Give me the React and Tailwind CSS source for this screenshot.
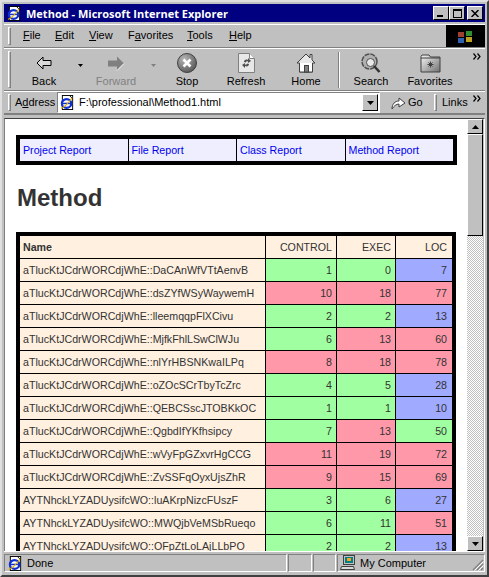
import React from "react";

const F = { fontFamily: '"Liberation Sans", Arial, sans-serif' };
const UI = { fontFamily: '"Liberation Sans", Arial, sans-serif' };
const TITLE = { fontFamily: '"Open Sans", "Noto Sans", sans-serif' };

const G = "bg-[#a0ffa0]";
const P = "bg-[#ff99aa]";
const B = "bg-[#a0aaff]";

const rows = [
  ["aTlucKtJCdrWORCdjWhE::DaCAnWfVTtAenvB", 1, G, 0, G, 7, B],
  ["aTlucKtJCdrWORCdjWhE::dsZYfWSyWaywemH", 10, P, 18, P, 77, P],
  ["aTlucKtJCdrWORCdjWhE::lleemqqpFlXCivu", 2, G, 2, G, 13, B],
  ["aTlucKtJCdrWORCdjWhE::MjfkFhlLSwClWJu", 6, G, 13, P, 60, P],
  ["aTlucKtJCdrWORCdjWhE::nlYrHBSNKwaILPq", 8, P, 18, P, 78, P],
  ["aTlucKtJCdrWORCdjWhE::oZOcSCrTbyTcZrc", 4, G, 5, G, 28, B],
  ["aTlucKtJCdrWORCdjWhE::QEBCSscJTOBKkOC", 1, G, 1, G, 10, B],
  ["aTlucKtJCdrWORCdjWhE::QgbdIfYKfhsipcy", 7, G, 13, P, 50, G],
  ["aTlucKtJCdrWORCdjWhE::wVyFpGZxvrHgCCG", 11, P, 19, P, 72, P],
  ["aTlucKtJCdrWORCdjWhE::ZvSSFqOyxUjsZhR", 9, P, 15, P, 69, P],
  ["AYTNhckLYZADUysifcWO::luAKrpNizcFUszF", 3, G, 6, G, 27, B],
  ["AYTNhckLYZADUysifcWO::MWQjbVeMSbRueqo", 6, G, 11, G, 51, P],
  ["AYTNhckLYZADUysifcWO::OFpZtLoLAjLLbPO", 2, G, 2, G, 13, B],
];

function IE({ size = 16 }) {
  return (
    <svg width={size} height={size} viewBox="0 0 16 16" className="shrink-0">
      <rect x="2.5" y="0.5" width="11" height="15" fill="#fff" stroke="#000" />
      <path d="M10 0.5l3.5 3.5" stroke="#000" fill="none" />
      <ellipse cx="7" cy="9" rx="5" ry="4.6" fill="none" stroke="#1030d0" strokeWidth="2.4" />
      <path d="M2.5 9h9" stroke="#1030d0" strokeWidth="1.6" />
      <path d="M1 14c2 0 8-5 12-11" stroke="#e0b000" strokeWidth="1.2" fill="none" />
    </svg>
  );
}

function Grip() {
  return <div className="w-[3px] self-stretch my-[2px] border-t border-l border-b border-r border-t-white border-l-white border-b-[#808080] border-r-[#808080] shrink-0" />;
}

function Back() {
  return (
    <svg width="16" height="14" viewBox="0 0 16 14">
      <path d="M1 7l6-6v3.500h8v5H7V13z" fill="#d8d8d8" stroke="#000" strokeWidth="1" />
    </svg>
  );
}
function Forward() {
  return (
    <svg width="18" height="15" viewBox="0 0 18 15">
      <path d="M17 7.500l-7-7v4H1v6h9v4z" fill="#808080" />
      <path d="M10 14.500l7-7" stroke="#fff" fill="none" />
    </svg>
  );
}
function Stop() {
  return (
    <svg width="20" height="20" viewBox="0 0 20 20">
      <defs>
        <radialGradient id="st" cx="0.35" cy="0.3" r="0.8">
          <stop offset="0" stopColor="#b8b8b8" />
          <stop offset="1" stopColor="#505050" />
        </radialGradient>
      </defs>
      <circle cx="10" cy="10" r="9.500" fill="url(#st)" stroke="#404040" />
      <path d="M6.500 6.500l7 7M13.500 6.500l-7 7" stroke="#fff" strokeWidth="2.600" />
    </svg>
  );
}
function Refresh() {
  return (
    <svg width="17" height="20" viewBox="0 0 17 20">
      <path d="M0.500 0.500h11l5 5v14H0.500z" fill="#e8e8e8" stroke="#808080" />
      <path d="M11.500 0.500v5h5" fill="#fff" stroke="#808080" />
      <path d="M6 9c0-2 2-3 4-2V5l3 3-3 2V8.500c-1-.4-2 0-2 1z" fill="#505050" />
      <path d="M11 11c0 2-2 3-4 2v2l-3-3 3-2v1.500c1 .4 2 0 2-1z" fill="#505050" />
    </svg>
  );
}
function Home() {
  return (
    <svg width="20" height="20" viewBox="0 0 20 20">
      <path d="M1 10L10 1l4 4V1.500h2V7l3 3h-2.500v9h-13v-9z" fill="#e8e8e8" stroke="#404040" />
      <path d="M3.500 10v9h13v-9" fill="#ffffff" stroke="#404040" />
      <rect x="8.500" y="12.500" width="4" height="6.500" fill="#808080" stroke="#404040" />
    </svg>
  );
}
function Search() {
  return (
    <svg width="20" height="21" viewBox="0 0 20 21">
      <circle cx="8.500" cy="8.500" r="7.500" fill="#b0b0b0" stroke="#505050" strokeWidth="1.500" strokeDasharray="5 1" />
      <circle cx="9.500" cy="9.500" r="4" fill="#e8e8e8" stroke="#505050" />
      <path d="M13 13l5.500 6" stroke="#303030" strokeWidth="2.500" />
    </svg>
  );
}
function Favorites() {
  return (
    <svg width="21" height="19" viewBox="0 0 21 19">
      <defs>
        <linearGradient id="fv" x1="0" y1="0" x2="1" y2="1">
          <stop offset="0" stopColor="#f8f8f8" />
          <stop offset="1" stopColor="#707070" />
        </linearGradient>
      </defs>
      <path d="M1 2.500l1-1.500h7l1.500 2h9.500v15H1z" fill="url(#fv)" stroke="#404040" />
      <path d="M1 4h19" stroke="#404040" />
      <path d="M10.500 7.500v6M7.500 10.500h6M8.500 8.500l4 4M12.500 8.500l-4 4" stroke="#404040" />
    </svg>
  );
}
function Win() {
  return (
    <svg width="17" height="15" viewBox="0 0 17 15">
      <path d="M1 3h6v5H1z" fill="#a04030" />
      <path d="M9 2h6v5H9z" fill="#309030" />
      <path d="M1 9h6v5H1z" fill="#3060b0" />
      <path d="M9 8h6v5H9z" fill="#c0a020" />
    </svg>
  );
}
function Computer() {
  return (
    <svg width="16" height="16" viewBox="0 0 16 16">
      <rect x="3.500" y="0.500" width="11" height="9" fill="#c0c0c0" stroke="#404040" />
      <rect x="5" y="2" width="8" height="6" fill="#008080" />
      <rect x="7" y="3" width="4" height="3" fill="#ffa020" />
      <path d="M1.500 11.500h12l1 3h-14z" fill="#d8d8d8" stroke="#404040" />
    </svg>
  );
}

function Chevron() {
  return (
    <svg width="8" height="7" viewBox="0 0 8 7">
      <path d="M0.500 0.500l2.500 3-2.500 3M4.500 0.500l2.500 3-2.500 3" stroke="#000" fill="none" strokeWidth="1.200" />
    </svg>
  );
}
function Caret({ c = "#000", w = 5 }) {
  return (
    <svg width={w} height="3" viewBox="0 0 5 3">
      <path d="M0 0h5L2.500 3z" fill={c} />
    </svg>
  );
}

function Tool({ label, w, icon, dim }) {
  return (
    <div className="flex flex-col items-center shrink-0" style={{ width: w }}>
      <div className="h-[23px] flex items-center justify-center">{icon}</div>
      <span className={"text-[11px] leading-[13px] whitespace-nowrap " + (dim ? "text-[#808080]" : "text-black")}>{label}</span>
    </div>
  );
}

function Titlebtn({ children }) {
  return (
    <div className="w-[16px] h-[14px] bg-[#c0c0c0] border border-t-white border-l-white border-b-black border-r-black flex items-center justify-center">
      {children}
    </div>
  );
}

function ScrollBtn({ up }) {
  return (
    <div className="h-[15px] shrink-0 bg-[#c0c0c0] border border-t-white border-l-white border-b-black border-r-black flex items-center justify-center">
      <svg width="7" height="4" viewBox="0 0 7 4">
        <path d={up ? "M0 4h7L3.500 0z" : "M0 0h7L3.500 4z"} fill="#000" />
      </svg>
    </div>
  );
}

export default function App() {
  const nav = ["Project Report", "File Report", "Class Report", "Method Report"];
  const sunken = "border border-t-[#808080] border-l-[#808080] border-b-white border-r-white";
  return (
    <div style={UI} className="w-[489px] h-[577px] overflow-hidden bg-[#c0c0c0] border-2 border-t-[#dfdfdf] border-l-[#dfdfdf] border-b-[#404040] border-r-[#404040] pt-[2px] px-[2px] flex flex-col text-black">
      {/* Title bar */}
      <div className="h-[18px] shrink-0 bg-[#000080] flex items-center pl-[3px] pr-[2px]">
        <IE size={15} />
        <span style={TITLE} className="ml-[4px] text-white font-bold text-[11px] whitespace-nowrap leading-none">Method - Microsoft Internet Explorer</span>
        <div className="ml-auto flex items-center">
          <Titlebtn>
            <div className="w-[6px] h-[2px] bg-black mt-[6px] mr-[2px]" />
          </Titlebtn>
          <Titlebtn>
            <div className="w-[9px] h-[9px] border border-t-2 border-black" />
          </Titlebtn>
          <div className="ml-[2px]">
            <Titlebtn>
              <svg width="8" height="7" viewBox="0 0 8 7">
                <path d="M0.500 0l7 7M7.500 0l-7 7" stroke="#000" strokeWidth="1.500" />
              </svg>
            </Titlebtn>
          </div>
        </div>
      </div>

      {/* Menu */}
      <div className="h-[24px] mt-[2px] shrink-0 flex items-stretch border-t border-white border-b border-b-[#808080]">
        <div className="flex items-center flex-1 pl-[4px]">
          <Grip />
          <div className="flex items-center text-[11px] leading-[13px] pb-[2px] ml-[12px] gap-[15px] whitespace-nowrap">
            <span className="w-[17px]"><u>F</u>ile</span>
            <span className="w-[19px]"><u>E</u>dit</span>
            <span className="w-[24px]"><u>V</u>iew</span>
            <span className="w-[44px]">F<u>a</u>vorites</span>
            <span className="w-[27px]"><u>T</u>ools</span>
            <span><u>H</u>elp</span>
          </div>
        </div>
        <div className="w-[39px] bg-black flex items-center justify-center">
          <Win />
        </div>
      </div>

      {/* Toolbar */}
      <div className="h-[43px] shrink-0 flex items-center pl-[4px] border-t border-white border-b border-b-[#808080]">
        <Grip />
        <Tool label="Back" w={66} icon={<Back />} />
        <div className="w-[6px] pb-[8px] flex justify-center"><Caret /></div>
        <Tool label="Forward" w={66} dim icon={<Forward />} />
        <div className="w-[8px] pb-[8px] flex justify-center"><Caret c="#808080" /></div>
        <Tool label="Stop" w={60} icon={<Stop />} />
        <Tool label="Refresh" w={58} icon={<Refresh />} />
        <Tool label="Home" w={62} icon={<Home />} />
        <div className="w-[2px] h-[36px] ml-px border-l border-l-[#808080] border-r border-r-white" />
        <Tool label="Search" w={62} icon={<Search />} />
        <Tool label="Favorites" w={56} icon={<Favorites />} />
        <div className="ml-auto mr-[4px] self-start mt-[4px]"><Chevron /></div>
      </div>

      {/* Address */}
      <div className="h-[24px] shrink-0 flex items-center pl-[4px] border-t border-white border-b-2 border-b-[#808080]">
        <Grip />
        <span className="text-[11px] ml-[4px] w-[42px]">A<u>d</u>dress</span>
        <div className="w-[323px] h-[21px] bg-white border border-t-[#808080] border-l-[#808080] border-b-white border-r-white flex items-center pl-[2px] pr-[1px]">
          <IE size={15} />
          <span className="ml-[4px] text-[11px] whitespace-nowrap">F:\professional\Method1.html</span>
          <div className="ml-auto w-[16px] h-[17px] bg-[#c0c0c0] border border-t-white border-l-white border-b-black border-r-black flex items-center justify-center">
            <svg width="7" height="4" viewBox="0 0 7 4"><path d="M0 0h7L3.500 4z" fill="#000" /></svg>
          </div>
        </div>
        <div className="ml-[11px] flex items-center w-[43px]">
          <svg width="16" height="15" viewBox="0 0 16 15">
            <path d="M1 14c0-5 3-8 7-8V3l6 5-6 4V9c-3 0-5 2-7 5z" fill="#fff" stroke="#404040" />
          </svg>
          <span className="text-[11px] ml-[1px]">Go</span>
        </div>
        <Grip />
        <span className="text-[11px] ml-[5px]">Links</span>
        <div className="ml-auto mr-[4px] self-start mt-[3px]"><Chevron /></div>
      </div>

      {/* Client */}
      <div className="flex-1 min-h-0 mt-[3px] flex border-t border-l border-t-[#404040] border-l-[#808080] border-r border-r-white pr-[1px]">
        <div className="flex-1 min-w-0 bg-white overflow-hidden pt-[16px] pl-[11px]" style={F}>
          <div className="w-[441px] border-4 border-black flex h-[30px] bg-black gap-px text-[10.67px] text-[#0000ee]">
            {nav.map((n) => (
              <div key={n} className="bg-[#eeeeff] flex items-center pl-[3px] flex-1">{n}</div>
            ))}
          </div>
          <h1 className="text-[24px] font-bold text-[#333333] leading-[28px] mt-[19px] ml-px">Method</h1>
          <div className="mt-[20px] w-[440px] border-4 border-b-0 border-black">
            <table className="w-[432px] table-fixed border-separate border-spacing-0 text-[10.67px] text-[#333333]">
              <colgroup>
                <col className="w-[246px]" />
                <col className="w-[71px]" />
                <col className="w-[59px]" />
                <col className="w-[56px]" />
              </colgroup>
              <thead>
                <tr>
                  <th className="h-[23px] bg-[#fff0e0] text-left font-bold pl-[3px] border-r border-b border-black">Name</th>
                  <th className="h-[23px] bg-[#fff0e0] text-right font-normal pr-[4px] border-r border-b border-black">CONTROL</th>
                  <th className="h-[23px] bg-[#fff0e0] text-right font-normal pr-[4px] border-r border-b border-black">EXEC</th>
                  <th className="h-[23px] bg-[#fff0e0] text-right font-normal pr-[5px] border-b border-black">LOC</th>
                </tr>
              </thead>
              <tbody>
                {rows.map((r) => (
                  <tr key={r[0]}>
                    <td className="h-[23px] bg-[#fff0e0] pl-[3px] border-r border-b border-black whitespace-nowrap overflow-hidden">{r[0]}</td>
                    <td className={"h-[23px] text-right pr-[4px] border-r border-b border-black " + r[2]}>{r[1]}</td>
                    <td className={"h-[23px] text-right pr-[4px] border-r border-b border-black " + r[4]}>{r[3]}</td>
                    <td className={"h-[23px] text-right pr-[5px] border-b border-black " + r[6]}>{r[5]}</td>
                  </tr>
                ))}
              </tbody>
            </table>
          </div>
        </div>
        {/* Scrollbar */}
        <div className="w-[16px] shrink-0 flex flex-col bg-white">
          <ScrollBtn up />
          <div className="h-[102px] shrink-0 bg-[#c0c0c0] border border-t-white border-l-white border-b-black border-r-black" />
          <div className="flex-1 bg-[repeating-conic-gradient(#c0c0c0_0_25%,#ffffff_0_50%)] bg-[length:2px_2px]" />
          <ScrollBtn />
        </div>
      </div>

      {/* Status bar */}
      <div className="h-[24px] shrink-0 flex items-stretch border-t border-t-white text-[11px] pt-[2px] pb-[3px]">
        <div className={"w-[283px] flex items-center pl-[3px] " + sunken}>
          <IE size={15} />
          <span className="ml-[4px]">Done</span>
        </div>
        <div className={"w-[24px] ml-px " + sunken} />
        <div className={"w-[23px] ml-px " + sunken} />
        <div className={"flex-1 ml-px flex items-center pl-[2px] relative " + sunken}>
          <Computer />
          <span className="ml-[4px]">My Computer</span>
          <svg width="12" height="12" viewBox="0 0 12 12" className="absolute right-0 bottom-0">
            <path d="M11 1L1 11M11 5l-6 6M11 9l-2 2" stroke="#808080" strokeWidth="1.200" />
            <path d="M11.500 2.500l-9 9M11.500 6.500l-5 5" stroke="#ffffff" />
          </svg>
        </div>
      </div>
    </div>
  );
}
